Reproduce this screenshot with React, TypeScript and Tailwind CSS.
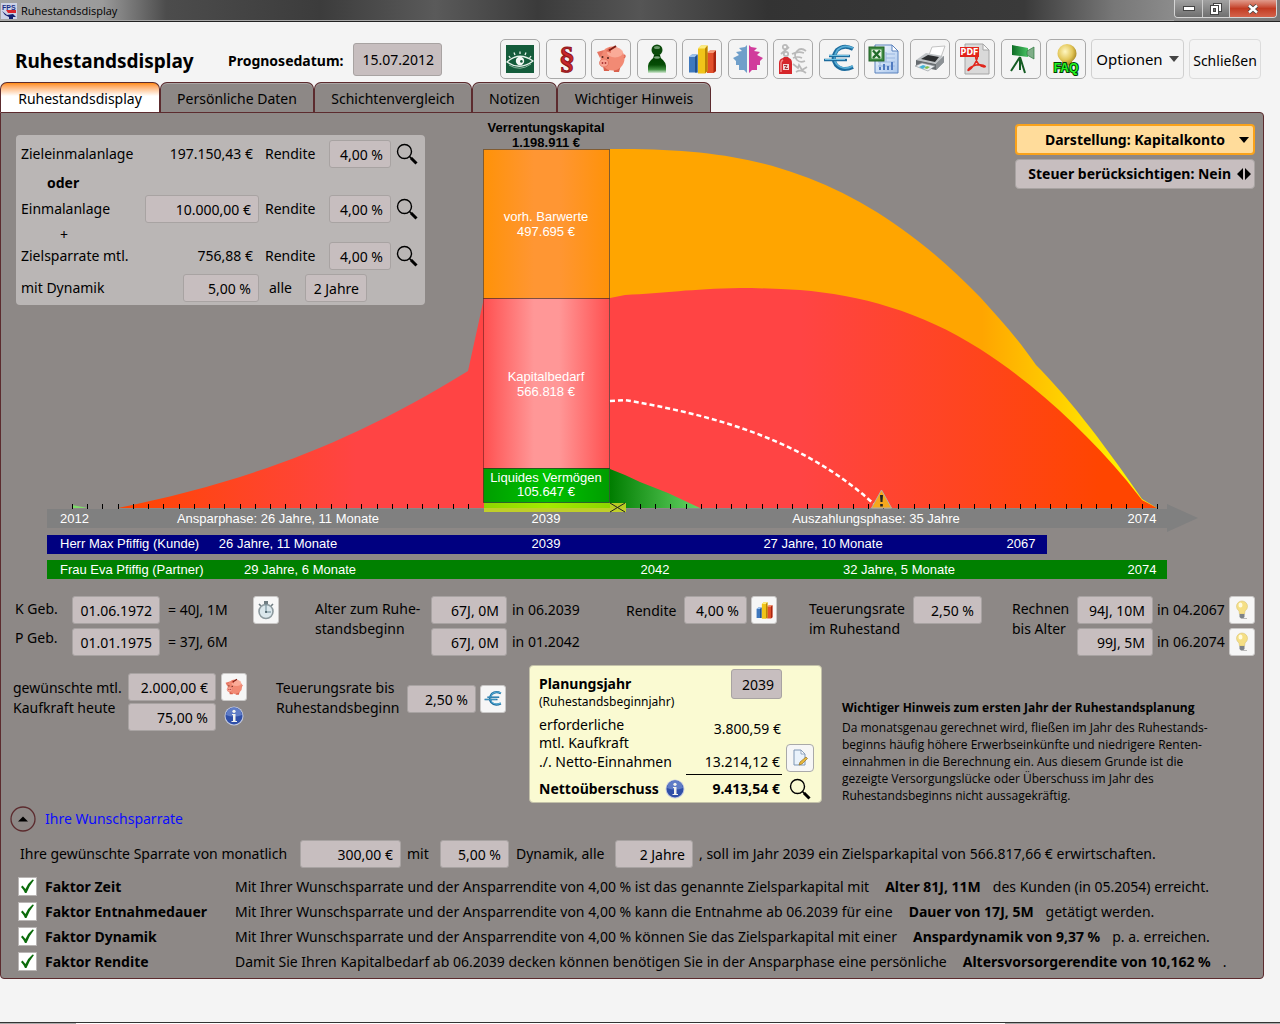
import { FC, ReactElement, ReactNode, useState } from "react";

const tabs = [
  { name: "Ruhestandsdisplay", width: "w-[160px]" },
  { name: "Persönliche Daten", width: "w-[154px]" },
  { name: "Schichtenvergleich", width: "w-[158px]" },
  { name: "Notizen", width: "w-[85px]" },
  { name: "Wichtiger Hinweis", width: "w-[154px]" },
];

const factors = [
  {
    name: "Faktor Zeit",
    before:
      "Mit Ihrer Wunschsparrate und der Ansparrendite von 4,00 % ist das genannte Zielsparkapital mit",
    strong: "Alter 81J, 11M",
    after: "des Kunden (in 05.2054) erreicht.",
  },
  {
    name: "Faktor Entnahmedauer",
    before:
      "Mit Ihrer Wunschsparrate und der Ansparrendite von 4,00 % kann die Entnahme ab 06.2039 für eine",
    strong: "Dauer von 17J, 5M",
    after: "getätigt werden.",
  },
  {
    name: "Faktor Dynamik",
    before:
      "Mit Ihrer Wunschsparrate und der Ansparrendite von 4,00 % können Sie das Zielsparkapital mit einer",
    strong: "Anspardynamik von 9,37 %",
    after: "p. a. erreichen.",
  },
  {
    name: "Faktor Rendite",
    before:
      "Damit Sie Ihren Kapitalbedarf ab 06.2039 decken können benötigen Sie in der Ansparphase eine persönliche",
    strong: "Altersvorsorgerendite von 10,162 %",
    after: ".",
  },
];

/* ---------- icons ---------- */

const EyeIcon = () => (
  <svg width="28" height="28" viewBox="0 0 28 28">
    <rect width="28" height="28" fill="#145c3b" />
    <path d="M1 17Q13 6 27 16Q14 26 1 17Z" fill="none" stroke="#e8f3ec" strokeWidth="1.3" />
    <path d="M3 20Q14 27 25 19" fill="none" stroke="#a9ccb9" strokeWidth="0.8" />
    <circle cx="14" cy="16" r="4.2" fill="#f4f8f5" />
    <circle cx="15.4" cy="16.4" r="1.3" fill="#145c3b" />
    <path d="M3 11l1.2 2M8 7.500l1 2.500M14 6.500v2.500M20 7.500l-1 2.500M25 11l-1.400 2" stroke="#e8f3ec" strokeWidth="1.3" />
  </svg>
);

const ParagraphIcon = () => (
  <svg width="32" height="38" viewBox="0 0 32 38">
    <text
      x="17"
      y="29"
      textAnchor="middle"
      fontSize="32"
      fontWeight="700"
      fill="#c9282b"
      stroke="#8c1518"
      strokeWidth="1"
      fontFamily="Liberation Serif"
    >
      §
    </text>
  </svg>
);

const PigIcon: FC<{ size?: number }> = ({ size = 30 }) => (
  <svg width={size} height={size} viewBox="0 0 30 30">
    <path d="M7 22l1 5h5l1-3zM17 24l1 4h5l2-7z" fill="#d9604c" />
    <ellipse cx="16.500" cy="14.500" rx="12" ry="12" fill="#f28a74" />
    <ellipse cx="19" cy="8.500" rx="8" ry="5" fill="#fbb3a1" opacity="0.8" />
    <path d="M1 8l7-2-4 8z" fill="#e77562" />
    <path d="M10 7l4-4 1 6z" fill="#e06a56" />
    <ellipse cx="8" cy="19" rx="4.500" ry="4" fill="#f9a493" stroke="#dd6b57" strokeWidth="0.7" />
    <circle cx="6.500" cy="19" r="0.900" fill="#a33" />
    <circle cx="9.500" cy="19" r="0.900" fill="#a33" />
    <circle cx="6.500" cy="13" r="1" fill="#51201a" />
    <circle cx="12" cy="14" r="1" fill="#51201a" />
    <path d="M13 6.500L20 2" stroke="#7f1d14" strokeWidth="2" />
    <path d="M28 11q2 1 0 3" stroke="#e06a56" strokeWidth="1.500" fill="none" />
  </svg>
);

const PersonIcon = () => (
  <svg width="30" height="32" viewBox="0 0 30 32">
    <defs>
      <linearGradient id="person" x1="0" y1="0" x2="0" y2="1">
        <stop offset="0" stopColor="#003c00" />
        <stop offset="0.55" stopColor="#064d06" />
        <stop offset="0.8" stopColor="#3f8f3f" />
        <stop offset="1" stopColor="#d5ead5" />
      </linearGradient>
    </defs>
    <circle cx="15" cy="7" r="5.500" fill="#0b4a0b" />
    <ellipse cx="15" cy="4.500" rx="3" ry="1.600" fill="#6b9a6b" />
    <path d="M12 12h6q0 3 3 5q3 3 3 6v7H6v-7q0-3 3-6q3-2 3-5z" fill="url(#person)" />
    <ellipse cx="15" cy="14.500" rx="3" ry="1.200" fill="#7ea77e" />
  </svg>
);

const BarsIcon: FC<{ size?: number }> = ({ size = 29 }) => (
  <svg width={size} height={size} viewBox="0 0 29 29">
    <path d="M1 12l3-2.500h5.500v18H1z" fill="#3f78bd" />
    <path d="M1 12l3-2.500h5.500L7 12z" fill="#9cc3ee" />
    <path d="M7 12l2.500-2.500v18H7z" fill="#23518c" />
    <path d="M19 8l3-2.500h6V26l-2.500 2H19z" fill="#e2502b" />
    <path d="M19 8l3-2.500h6L25.500 8z" fill="#f59a77" />
    <path d="M25.500 8L28 5.500V26l-2.500 2z" fill="#a8240f" />
    <path d="M10 3.500L13 .5h6.500V26L17 28.500h-7z" fill="#f0c419" />
    <path d="M10 3.500L13 .5h6.500L17 3.500z" fill="#fcec7e" />
    <path d="M17 3.500l2.500-3V26L17 28.500z" fill="#b98405" />
  </svg>
);

const FacesIcon = () => (
  <svg width="30" height="30" viewBox="0 0 30 30">
    <path d="M14 1L12 3 6 4 9 7 3 8 6 11 0 14 3 17V21L6 21V26L11 26 14 29Z" fill="#6f9fca" />
    <path d="M16 1L18 3 24 4 21 7 27 8 24 11 30 14 27 17V21L24 21V26L19 26 16 29Z" fill="#d13c9c" />
  </svg>
);

const CashIcon = () => (
  <svg width="30" height="32" viewBox="0 0 30 32">
    <g fill="none" stroke="#b9b9b9" strokeWidth="1.700">
      <circle cx="7" cy="4" r="2.200" />
      <circle cx="8" cy="11" r="2.200" />
      <path d="M11 4L3 11" />
      <path d="M28 8q-5-4-9 0-4 4 0 9 3 3 8 1M14 11q6-3 12-1M15 15q5-2 9 0" />
      <path d="M15 21l5 4 1-3 3 5 5-3M18 29q5-3 10 1" />
    </g>
    <path d="M1 31V20q0-4 4-5l1-1h4l1 1q3 1 3 5v11z" fill="#d6252a" />
    <path d="M3 29V20q0-2 2-3" stroke="#f28a8a" strokeWidth="1.500" fill="none" />
    <rect x="5" y="21" width="6" height="6" fill="#f2d6d6" />
    <path d="M6 22.500h3l-2 3h3" stroke="#8c1014" strokeWidth="0.800" fill="none" />
  </svg>
);

const EuroIcon: FC<{ size?: number }> = ({ size = 32 }) => (
  <svg width={size} height={size} viewBox="0 0 32 32">
    <g fill="none">
      <path d="M30 6Q21 1 14 7Q8 15 13 22Q19 29 30 24" stroke="#1c6b9d" strokeWidth="4" />
      <path d="M30 5Q21 1 14.500 7Q9 15 13.500 21Q20 28 30 23" stroke="#58aed6" strokeWidth="1.800" />
      <path d="M6 13h21M1 17h23" stroke="#1c6b9d" strokeWidth="2.600" />
      <path d="M6 12.500h20M2 16.500h20" stroke="#6fc0e2" strokeWidth="1" />
    </g>
  </svg>
);

const ExcelIcon = () => (
  <svg width="32" height="32" viewBox="0 0 32 32">
    <defs>
      <linearGradient id="sheet" x1="0" y1="0" x2="1" y2="1">
        <stop offset="0" stopColor="#f4f9ff" />
        <stop offset="1" stopColor="#a9c6ec" />
      </linearGradient>
    </defs>
    <path d="M7 2h17l6 6v22H7z" fill="url(#sheet)" stroke="#5b82bd" />
    <path d="M24 2v6h6z" fill="#fff" stroke="#5b82bd" />
    <path d="M18 11h9M18 15h9M10 19h17M10 23h17M12 19v8M18 9v10" stroke="#9ab7e0" />
    <path d="M12 27v-3M16 27v-6M20 27v-4M24 27v-8" stroke="#4f7ac0" strokeWidth="2" />
    <rect x="1" y="4" width="15" height="14" fill="#3c8a41" stroke="#1e5f25" />
    <rect x="3.500" y="6.500" width="10" height="9" fill="#e4f1e2" />
    <path d="M5 7.500l7 7.500M12 7.500L5 15" stroke="#216b2a" strokeWidth="2.400" />
  </svg>
);

const PrinterIcon = () => (
  <svg width="32" height="28" viewBox="0 0 32 28">
    <path d="M15 10l3-8 13-1-4 11z" fill="#fdfdfd" stroke="#b5b5b5" strokeWidth="0.800" />
    <path d="M2 15l10-7 17 3-6 8z" fill="#bfc3c6" />
    <path d="M7 14l7-4 11 2-4 5z" fill="#2d2f31" />
    <path d="M2 15l20 4 8-8v6l-8 8-20-4z" fill="#676c70" />
    <path d="M22 19l8-8v6l-8 8z" fill="#8c9195" />
    <path d="M1 21l7-3 13 3-7 5z" fill="#e9edf0" stroke="#8c9195" strokeWidth="0.600" />
    <path d="M5 22l4-2 3 1-3 3z" fill="#45b3d6" />
    <path d="M10 23l3-2 3 1-3 2z" fill="#83bf4f" />
  </svg>
);

const PdfIcon = () => (
  <svg width="32" height="32" viewBox="0 0 32 32">
    <path d="M6 1h18l6 6v24H6z" fill="#d9d9d9" stroke="#a5a5a5" />
    <path d="M24 1v6h6z" fill="#f7f7f7" stroke="#a5a5a5" />
    <path
      d="M18 13q-2 0-1 3 2 7 8 8 2 0 1-1-2-2-9-1-7 2-8 5 0 1 1 0 5-3 8-11 1-3 0-3z"
      fill="none"
      stroke="#e0251b"
      strokeWidth="1.500"
    />
    <rect x="1" y="4" width="19" height="10" fill="#e2231a" />
    <text x="10.500" y="12" textAnchor="middle" fontSize="8" fontWeight="700" fill="#fff" fontFamily="DejaVu Sans">
      PDF
    </text>
  </svg>
);

const CameraIcon = () => (
  <svg width="30" height="32" viewBox="0 0 30 32">
    <defs>
      <linearGradient id="cam" x1="0" y1="0" x2="1" y2="0">
        <stop offset="0" stopColor="#0e6b25" />
        <stop offset="1" stopColor="#48c463" />
      </linearGradient>
    </defs>
    <path d="M6 2l16 3v9L6 12z" fill="url(#cam)" />
    <path d="M21 8l7-4v12l-7-4z" fill="#7fae88" stroke="#2b7a3c" strokeWidth="0.700" />
    <path d="M14 14L5 28M14 14l0 13M14 14l5 16" stroke="#155c23" strokeWidth="2" />
  </svg>
);

const FaqIcon = () => (
  <svg width="32" height="34" viewBox="0 0 32 34">
    <defs>
      <radialGradient id="faq" cx="0.400" cy="0.350" r="0.650">
        <stop offset="0" stopColor="#fff7c2" />
        <stop offset="0.6" stopColor="#e3c75a" />
        <stop offset="1" stopColor="#a5831c" />
      </radialGradient>
    </defs>
    <path d="M17 2a9.500 9.500 0 0 1 9.500 9.500q0 4-4.500 8v4H12v-4q-4.500-4-4.500-8A9.500 9.500 0 0 1 17 2z" fill="url(#faq)" />
    <text
      x="16"
      y="30"
      textAnchor="middle"
      fontSize="12"
      fontWeight="700"
      fill="#22f522"
      stroke="#033b03"
      strokeWidth="2"
      paintOrder="stroke"
      fontFamily="Liberation Sans"
    >
      FAQ
    </text>
  </svg>
);

const BulbIcon = () => (
  <svg width="18" height="20" viewBox="0 0 18 20">
    <path d="M9 1a5.500 5.500 0 0 1 5.500 5.500q0 2.500-2.500 4.500l-.5 3H6.500L6 11Q3.500 9 3.500 6.500A5.500 5.500 0 0 1 9 1z" fill="#f5df85" stroke="#d8c275" strokeWidth="0.600" />
    <ellipse cx="7.500" cy="5" rx="2" ry="2.500" fill="#fffbe0" />
    <path d="M6.500 14h5v3l-1.500 1.500H8L6.500 17z" fill="#7d8288" />
    <path d="M8 18.500h6" stroke="#b9b9b9" />
  </svg>
);

const StopwatchIcon = () => (
  <svg width="18" height="20" viewBox="0 0 18 20">
    <path d="M7 1h4v3H7z" fill="#6e7b80" />
    <path d="M2 4l2 2M16 4l-2 2" stroke="#6e7b80" strokeWidth="1.600" />
    <circle cx="9" cy="11.500" r="7" fill="#dbe7ec" stroke="#8c999e" strokeWidth="1.600" />
    <path d="M9 4v8h5" stroke="#6a8793" fill="none" />
    <circle cx="9" cy="12" r="1" fill="#40545d" />
  </svg>
);

const NoteIcon = () => (
  <svg width="16" height="18" viewBox="0 0 16 18">
    <path d="M2 1h7l4 4v11H2z" fill="#eaf2fb" stroke="#7f96b4" />
    <path d="M9 1v4h4z" fill="#fff" stroke="#7f96b4" strokeWidth="0.800" />
    <path d="M7 16l1-3 6-5 1.500 1.500L10 15z" fill="#e9b83b" stroke="#86641a" strokeWidth="0.600" />
  </svg>
);

const InfoIcon = () => (
  <svg width="20" height="20" viewBox="0 0 20 20">
    <circle cx="10" cy="10" r="9.500" fill="#c5cbe0" />
    <circle cx="10" cy="10" r="8.500" fill="#2f4fa8" />
    <path d="M2 9a8 7.500 0 0 1 16 0q-8 3-16 0z" fill="#5f7cc6" />
    <circle cx="10" cy="5.300" r="1.600" fill="#f3f3ee" />
    <path d="M8 8h3.500v7H13v1H7.500v-1H9V9H8z" fill="#f3f3ee" />
  </svg>
);

const Magnifier = () => (
  <svg width="22" height="22" viewBox="0 0 22 22" fill="none" stroke="#000">
    <circle cx="8.500" cy="8.500" r="7" strokeWidth="1.400" />
    <path d="M13.500 13.500l2 2" strokeWidth="1.600" />
    <path d="M15 15l5.500 5.500" strokeWidth="3" />
  </svg>
);

const LogoIcon = () => (
  <svg width="16" height="16" viewBox="0 0 16 16">
    <rect width="16" height="16" fill="#cdd3e6" />
    <text x="1" y="7" fontSize="7" fontWeight="700" fill="#1a2f86" fontFamily="Liberation Sans">
      FPS
    </text>
    <path d="M5 7h10v3H7z" fill="#d8262c" />
    <path d="M1 8l5 4 6-1 3 3H12v2H8v-2l-4-2z" fill="#12206e" />
  </svg>
);

const toolbar: { label: string; icon: ReactNode }[] = [
  { label: "Ansicht", icon: <EyeIcon /> },
  { label: "Recht", icon: <ParagraphIcon /> },
  { label: "Sparen", icon: <PigIcon /> },
  { label: "Person", icon: <PersonIcon /> },
  { label: "Diagramm", icon: <BarsIcon /> },
  { label: "Partner", icon: <FacesIcon /> },
  { label: "Inflation", icon: <CashIcon /> },
  { label: "Euro", icon: <EuroIcon /> },
  { label: "Excel", icon: <ExcelIcon /> },
  { label: "Drucken", icon: <PrinterIcon /> },
  { label: "PDF", icon: <PdfIcon /> },
  { label: "Film", icon: <CameraIcon /> },
  { label: "FAQ", icon: <FaqIcon /> },
];

/* ---------- small controls ---------- */

type FieldProps = {
  id: string;
  value: string;
  label?: string;
  className?: string;
};

const Field: FC<FieldProps> = ({ id, value, label, className = "" }) => (
  <input
    id={id}
    aria-label={label}
    defaultValue={value}
    className={`h-7 min-w-0 shrink-0 rounded-[3px] border border-[#a8a3a2] bg-[#c7bebf] px-[7px] text-right ${className}`}
  />
);

const IconButton: FC<{ label: string; children: ReactNode }> = ({ label, children }) => (
  <button
    aria-label={label}
    className="flex h-7 w-[26px] shrink-0 items-center justify-center rounded-[3px] border border-[#c9c7c6] bg-[#f6f6f6]"
  >
    {children}
  </button>
);

const PlainButton: FC<{ label: string; children: ReactNode }> = ({ label, children }) => (
  <button aria-label={label} className="flex shrink-0 items-center justify-center">
    {children}
  </button>
);

/* ---------- chart ---------- */

const ticksLeft = Array.from({ length: 27 }, (_, i) => Math.round(72 + i * 15.23));
const ticksRight = Array.from({ length: 35 }, (_, i) => Math.round(640 + i * 15.2));

const Chart: FC = (): ReactElement => (
  <svg
    viewBox="1 113 1262 474"
    className="col-start-1 row-start-1 block w-full"
    fontFamily="Liberation Sans, Arial, sans-serif"
    fontSize="13"
    role="img"
    aria-label="Kapitalverlauf"
  >
    <defs>
      <linearGradient id="redLeft" gradientUnits="userSpaceOnUse" x1="118" y1="0" x2="484" y2="0">
        <stop offset="0" stopColor="#ff4500" />
        <stop offset="0.65" stopColor="#ff4444" />
        <stop offset="1" stopColor="#ff4444" />
      </linearGradient>
      <linearGradient id="redRight" gradientUnits="userSpaceOnUse" x1="610" y1="0" x2="1157" y2="0">
        <stop offset="0" stopColor="#ff4444" />
        <stop offset="0.35" stopColor="#ff4444" />
        <stop offset="0.9" stopColor="#ff4500" />
        <stop offset="1" stopColor="#ff4500" />
      </linearGradient>
      <linearGradient id="orangeRight" gradientUnits="userSpaceOnUse" x1="610" y1="0" x2="1157" y2="0">
        <stop offset="0" stopColor="#ffa500" />
        <stop offset="0.68" stopColor="#ffa500" />
        <stop offset="0.94" stopColor="#fff200" />
        <stop offset="1" stopColor="#ffff00" />
      </linearGradient>
      <linearGradient id="greenRight" gradientUnits="userSpaceOnUse" x1="610" y1="0" x2="700" y2="0">
        <stop offset="0" stopColor="#007d00" />
        <stop offset="1" stopColor="#66d466" />
      </linearGradient>
      <linearGradient id="barOrange">
        <stop offset="0" stopColor="#ff9208" />
        <stop offset="0.4" stopColor="#ff9633" />
        <stop offset="0.6" stopColor="#ff9633" />
        <stop offset="1" stopColor="#ff9208" />
      </linearGradient>
      <linearGradient id="barRed">
        <stop offset="0" stopColor="#ff5050" />
        <stop offset="0.4" stopColor="#ff9797" />
        <stop offset="0.6" stopColor="#ff9797" />
        <stop offset="1" stopColor="#ff5050" />
      </linearGradient>
      <linearGradient id="barGreen">
        <stop offset="0" stopColor="#009d00" />
        <stop offset="0.5" stopColor="#00c200" />
        <stop offset="1" stopColor="#009d00" />
      </linearGradient>
      <linearGradient id="barLime">
        <stop offset="0" stopColor="#8ed600" />
        <stop offset="0.5" stopColor="#a2ea00" />
        <stop offset="1" stopColor="#8ed600" />
      </linearGradient>
    </defs>

    {/* areas */}
    <path
      d="M610 149C690 148 750 156 800 175C860 196 920 235 980 297C1000 319 1018 339 1036 365C1065 394 1098 435 1142 499L1157 508H610Z"
      fill="url(#orangeRight)"
    />
    <path d="M118 508C240 483 345 447 468 371L484 298V508Z" fill="url(#redLeft)" />
    <path
      d="M610 298L625 295C665 293 690 289 740 288C760 288 780 289 800 290C860 295 920 311 980 349C1030 381 1082 427 1127 481L1142 500L1157 508H610Z"
      fill="url(#redRight)"
    />
    <path d="M610 469L625 475L640 482L668 493L700 508H610Z" fill="url(#greenRight)" />
    <path d="M72 505L88 508H72Z" fill="#7fdc6a" />

    {/* capital column */}
    <g stroke="#000" strokeOpacity="0.35">
      <rect x="483.500" y="149.500" width="126" height="149" fill="url(#barOrange)" />
      <rect x="483.500" y="298.500" width="126" height="170" fill="url(#barRed)" />
      <rect x="483.500" y="468.500" width="126" height="34" fill="url(#barGreen)" />
    </g>
    <rect x="484" y="503" width="126" height="9" fill="url(#barLime)" />
    <rect x="610" y="503" width="16" height="9" fill="#b8cc22" />

    <path
      d="M610 401L625 400C710 415 800 437 874 504"
      fill="none"
      stroke="#fff"
      strokeWidth="2.500"
      strokeDasharray="5 3"
    />

    {/* time axis */}
    {[...ticksLeft, ...ticksRight].map((x) => (
      <rect key={x} x={x} y="504" width="1" height="5" fill="#000" />
    ))}
    <path d="M881.500 490L891.500 508H871.500Z" fill="#f6a81c" stroke="#b9b0a0" strokeLinejoin="round" />
    <path d="M880 495h3l-.5 7h-2zM880.200 504h2.600v2.400h-2.600z" fill="#222" />

    <path d="M47 509H1167V504L1198 518L1167 532V528H47Z" fill="#808080" />
    <rect x="484" y="508" width="142" height="4" fill="#c0cf2a" />
    <path d="M610 503l15 9M625 503l-15 9" stroke="#222" />
    <rect x="47" y="535" width="1000" height="19" fill="#000080" />
    <rect x="47" y="560" width="1120" height="19" fill="#008000" />

    <g fill="#000" fontWeight="700" textAnchor="middle">
      <text x="546" y="132">Verrentungskapital</text>
      <text x="546" y="147">1.198.911 €</text>
    </g>
    <g fill="#fff" textAnchor="middle">
      <text x="546" y="221">vorh. Barwerte</text>
      <text x="546" y="236">497.695 €</text>
      <text x="546" y="381">Kapitalbedarf</text>
      <text x="546" y="396">566.818 €</text>
      <text x="546" y="482">Liquides Vermögen</text>
      <text x="546" y="496">105.647 €</text>
      <text x="278" y="523">Ansparphase: 26 Jahre, 11 Monate</text>
      <text x="546" y="523">2039</text>
      <text x="876" y="523">Auszahlungsphase: 35 Jahre</text>
      <text x="1142" y="523">2074</text>
      <text x="278" y="548">26 Jahre, 11 Monate</text>
      <text x="546" y="548">2039</text>
      <text x="823" y="548">27 Jahre, 10 Monate</text>
      <text x="1021" y="548">2067</text>
      <text x="300" y="574">29 Jahre, 6 Monate</text>
      <text x="655" y="574">2042</text>
      <text x="899" y="574">32 Jahre, 5 Monate</text>
      <text x="1142" y="574">2074</text>
    </g>
    <g fill="#fff">
      <text x="60" y="523">2012</text>
      <text x="60" y="548">Herr Max Pfiffig (Kunde)</text>
      <text x="60" y="574">Frau Eva Pfiffig (Partner)</text>
    </g>
  </svg>
);

/* ---------- panels over the chart ---------- */

const InvestmentPanel: FC = (): ReactElement => (
  <div className="flex w-[409px] flex-col rounded bg-[#bab6b5] pt-[5px] pr-[2px] pb-[3px] pl-[5px]">
    <div className="grid grid-cols-[124px_114px_70px_62px_1fr] items-center">
      <span>Zieleinmalanlage</span>
      <span className="pr-[6px] text-right">197.150,43 €</span>
      <label htmlFor="rendite1" className="pl-[6px]">
        Rendite
      </label>
      <Field id="rendite1" value="4,00 %" />
      <PlainButton label="Details Zieleinmalanlage">
        <Magnifier />
      </PlainButton>
    </div>
    <div className="h-[27px] pt-[5px] pl-[26px] font-bold">oder</div>
    <div className="grid grid-cols-[124px_114px_70px_62px_1fr] items-center">
      <label htmlFor="einmal">Einmalanlage</label>
      <Field id="einmal" value="10.000,00 €" />
      <label htmlFor="rendite2" className="pl-[6px]">
        Rendite
      </label>
      <Field id="rendite2" value="4,00 %" />
      <PlainButton label="Details Einmalanlage">
        <Magnifier />
      </PlainButton>
    </div>
    <div className="h-[19px] pt-[2px] pl-[39px]">+</div>
    <div className="grid grid-cols-[124px_114px_70px_62px_1fr] items-center">
      <span>Zielsparrate mtl.</span>
      <span className="pr-[6px] text-right">756,88 €</span>
      <label htmlFor="rendite3" className="pl-[6px]">
        Rendite
      </label>
      <Field id="rendite3" value="4,00 %" />
      <PlainButton label="Details Zielsparrate">
        <Magnifier />
      </PlainButton>
    </div>
    <div className="mt-1 flex items-center">
      <label htmlFor="dynamik" className="w-[162px]">
        mit Dynamik
      </label>
      <Field id="dynamik" value="5,00 %" className="w-[76px]" />
      <label htmlFor="alle" className="w-[46px] pl-[10px]">
        alle
      </label>
      <Field id="alle" value="2 Jahre" className="w-[62px]" />
    </div>
  </div>
);

const DisplayOptions: FC = (): ReactElement => (
  <div className="flex w-[240px] flex-col gap-1 text-[14px] font-bold">
    <div className="grid items-center">
      <select
        aria-label="Darstellung"
        className="col-start-1 row-start-1 h-[31px] appearance-none rounded border-2 border-[#f9a21b] bg-[#ffdc9b] pr-7 text-right [text-align-last:right]"
      >
        <option>Darstellung: Kapitalkonto</option>
      </select>
      <svg width="10" height="6" className="pointer-events-none col-start-1 row-start-1 mr-[6px] justify-self-end">
        <path d="M0 0h10L5 6z" />
      </svg>
    </div>
    <button className="flex h-[30px] items-center justify-end gap-[6px] rounded border border-[#a8a3a2] bg-[#c7bebf] pr-[3px] whitespace-nowrap">
      Steuer berücksichtigen: Nein
      <svg width="14" height="12">
        <path d="M6 0v12L0 6zM8 0v12l6-6z" />
      </svg>
    </button>
  </div>
);

/* ---------- form rows ---------- */

const BirthRow: FC = (): ReactElement => (
  <div className="grid grid-cols-[300fr_311fr_183fr_203fr_243fr] pr-2 pl-[14px] leading-5 whitespace-nowrap">
    <div className="flex">
      <div className="grid grid-cols-[57px_88px_77px] items-center gap-y-1">
        <label htmlFor="kgeb" className="self-start pt-[3px]">
          K Geb.
        </label>
        <Field id="kgeb" value="01.06.1972" />
        <span className="pl-2">= 40J, 1M</span>
        <label htmlFor="pgeb" className="self-start">
          P Geb.
        </label>
        <Field id="pgeb" value="01.01.1975" />
        <span className="pl-2">= 37J, 6M</span>
      </div>
      <div className="ml-4">
        <IconButton label="Alter berechnen">
          <StopwatchIcon />
        </IconButton>
      </div>
    </div>
    <div className="flex">
      <div className="w-[116px] pt-[3px]">
        Alter zum Ruhe-
        <br />
        standsbeginn
      </div>
      <div className="grid grid-cols-[76px_1fr] items-center gap-y-1">
        <Field id="ruhe1" label="Alter zum Ruhestandsbeginn Kunde" value="67J, 0M" />
        <span className="pl-[5px]">in 06.2039</span>
        <Field id="ruhe2" label="Alter zum Ruhestandsbeginn Partner" value="67J, 0M" />
        <span className="pl-[5px]">in 01.2042</span>
      </div>
    </div>
    <div className="flex h-7 items-center">
      <label htmlFor="rendite4" className="w-[58px] pt-[2px]">
        Rendite
      </label>
      <Field id="rendite4" value="4,00 %" className="mr-1 w-[63px]" />
      <IconButton label="Rendite Diagramm">
        <BarsIcon size={17} />
      </IconButton>
    </div>
    <div className="flex">
      <label htmlFor="teuer1" className="w-[104px] pt-[3px]">
        Teuerungsrate
        <br />
        im Ruhestand
      </label>
      <Field id="teuer1" value="2,50 %" className="w-[69px]" />
    </div>
    <div className="flex">
      <div className="w-[65px] pt-[3px]">
        Rechnen
        <br />
        bis Alter
      </div>
      <div className="grid grid-cols-[76px_76px_26px] items-center gap-y-1">
        <Field id="bis1" label="Rechnen bis Alter Kunde" value="94J, 10M" />
        <span className="pl-[4px]">in 04.2067</span>
        <IconButton label="Hinweis Kunde">
          <BulbIcon />
        </IconButton>
        <Field id="bis2" label="Rechnen bis Alter Partner" value="99J, 5M" />
        <span className="pl-[4px]">in 06.2074</span>
        <IconButton label="Hinweis Partner">
          <BulbIcon />
        </IconButton>
      </div>
    </div>
  </div>
);

const PlanBox: FC = (): ReactElement => (
  <div className="h-[138px] w-[293px] rounded border border-[#c3c1a9] bg-[#fafad2] pt-[3px] pr-[7px] pl-[9px]">
    <div className="flex h-[46px] justify-between">
      <label htmlFor="plan" className="pt-[5px]">
        <span className="block leading-[20px] font-bold">Planungsjahr</span>
        <span className="block text-[12px] leading-4">(Ruhestandsbeginnjahr)</span>
      </label>
      <Field id="plan" value="2039" className="mr-[32px] h-[30px] w-[51px]" />
    </div>
    <div className="flex h-[38px] justify-between pt-[1px] leading-[18px]">
      <span>
        erforderliche
        <br />
        mtl. Kaufkraft
      </span>
      <span className="mr-[33px] pt-[4px]">3.800,59 €</span>
    </div>
    <div className="flex h-[18px] items-center leading-[18px]">
      <span className="grow">./. Netto-Einnahmen</span>
      <span className="mr-[6px]">13.214,12 €</span>
      <div className="-mt-2 h-7">
        <button
          aria-label="Einnahmen bearbeiten"
          className="flex h-7 w-7 items-center justify-center rounded border border-[#a9a9a9] bg-[#f6f6f6]"
        >
          <NoteIcon />
        </button>
      </div>
    </div>
    <div className="mr-[32px] ml-auto h-[4px] w-[96px] border-b border-black" />
    <div className="flex h-[26px] items-center pt-[2px] font-bold">
      <span>Nettoüberschuss</span>
      <span className="ml-[6px]">
        <InfoIcon />
      </span>
      <span className="mr-[9px] grow text-right">9.413,54 €</span>
      <span className="mr-[3px] flex">
        <PlainButton label="Details Nettoüberschuss">
          <Magnifier />
        </PlainButton>
      </span>
    </div>
  </div>
);

const PlanRow: FC = (): ReactElement => (
  <div className="mt-[9px] grid grid-cols-[263fr_253fr_313fr_413fr] pr-2 pl-3 leading-5 whitespace-nowrap">
    <div className="flex pt-2">
      <label htmlFor="kaufkraft" className="w-[115px] pt-[5px]">
        gewünschte mtl.
        <br />
        Kaufkraft heute
      </label>
      <div className="flex flex-col gap-[2px]">
        <Field id="kaufkraft" value="2.000,00 €" className="w-[88px]" />
        <Field id="prozent" label="Kaufkraft in Prozent" value="75,00 %" className="w-[88px]" />
      </div>
      <div className="ml-[5px] flex flex-col items-center gap-[5px]">
        <IconButton label="Sparen">
          <PigIcon size={18} />
        </IconButton>
        <InfoIcon />
      </div>
    </div>
    <div className="flex pt-[13px]">
      <label htmlFor="teuer2" className="w-[131px]">
        Teuerungsrate bis
        <br />
        Ruhestandsbeginn
      </label>
      <div className="mt-[7px] flex gap-1">
        <Field id="teuer2" value="2,50 %" className="w-[69px]" />
        <IconButton label="Teuerung">
          <EuroIcon size={18} />
        </IconButton>
      </div>
    </div>
    <PlanBox />
    <div className="pt-[34px] font-['Open_Sans',sans-serif] text-[12px] leading-[17px]">
      <h2 className="mb-[3px] font-bold">Wichtiger Hinweis zum ersten Jahr der Ruhestandsplanung</h2>
      <p>
        Da monatsgenau gerechnet wird, fließen im Jahr des Ruhestands-
        <br />
        beginns häufig höhere Erwerbseinkünfte und niedrigere Renten-
        <br />
        einnahmen in die Berechnung ein. Aus diesem Grunde ist die
        <br />
        gezeigte Versorgungslücke oder Überschuss im Jahr des
        <br />
        Ruhestandsbeginns nicht aussagekräftig.
      </p>
    </div>
  </div>
);

const SavingsSection: FC = (): ReactElement => (
  <section className="pt-[2px] pb-1">
    <button className="ml-[9px] flex items-center gap-[9px] text-[#0b0bff]">
      <svg width="26" height="26" viewBox="0 0 26 26">
        <circle cx="13" cy="13" r="12" fill="none" stroke="#5c2b2e" strokeWidth="1.300" />
        <path d="M8 15.500h10L13 10.500z" />
      </svg>
      Ihre Wunschsparrate
    </button>
    <div className="mt-2 flex items-center pl-[19px] whitespace-nowrap">
      <label htmlFor="sparrate" className="w-[280px]">
        Ihre gewünschte Sparrate von monatlich
      </label>
      <Field id="sparrate" value="300,00 €" className="w-[101px]" />
      <label htmlFor="spardyn" className="w-[39px] pl-[6px]">
        mit
      </label>
      <Field id="spardyn" value="5,00 %" className="w-[69px]" />
      <label htmlFor="sparalle" className="w-[106px] pl-[7px]">
        Dynamik, alle
      </label>
      <Field id="sparalle" value="2 Jahre" className="w-[78px]" />
      <span className="pl-[6px]">
        , soll im Jahr 2039 ein Zielsparkapital von 566.817,66 € erwirtschaften.
      </span>
    </div>
    <div className="mt-[6px]">
      {factors.map((factor) => (
        <div key={factor.name} className="flex h-[25px] items-center pl-[17px] whitespace-nowrap">
          <label className="flex w-[217px] items-center gap-2 font-bold">
            <span className="grid">
              <input
                type="checkbox"
                defaultChecked
                className="peer col-start-1 row-start-1 size-[19px] appearance-none border border-[#b9b5b4] bg-white"
              />
              <svg
                width="19"
                height="19"
                viewBox="0 0 19 19"
                className="pointer-events-none invisible col-start-1 row-start-1 peer-checked:visible"
              >
                <path d="M3 10l1.500-1.500 3 3.500Q10 6 14.500 2.500L16 3Q11 9 8.500 16H7Q5.500 12.500 3 10z" fill="#0b6b0b" />
              </svg>
            </span>
            {factor.name}
          </label>
          <span>{factor.before}</span>
          <strong className="mr-3 ml-4">{factor.strong}</strong>
          <span>{factor.after}</span>
        </div>
      ))}
    </div>
  </section>
);

/* ---------- window ---------- */

const TitleBar: FC = (): ReactElement => (
  <div className="flex h-[22px] items-start border-b border-[#222] bg-[linear-gradient(90deg,#a5a5a5_0%,#9a9a9a_8%,#4c4c4c_13%,#3c3c3c_25%,#5a5a5a_34%,#3b3b3b_42%,#555_50%,#333_60%,#3a3a3a_80%,#777_87%,#8d8d8d_92%,#777_100%)] pr-[3px]">
    <div className="flex h-[21px] grow items-center gap-1 border-b border-[#a8a8a8] pt-[1px] pl-[1px] font-['Open_Sans',sans-serif] text-[11px] text-black">
      <LogoIcon />
      Ruhestandsdisplay
    </div>
    <div className="flex h-[18px] overflow-hidden rounded-b border border-t-0 border-[#d5d5d5]">
      <button aria-label="Minimieren" className="flex w-7 items-center justify-center border-r border-[#ccc] bg-linear-to-b from-[#a2a2a2] to-[#6f6f6f]">
        <svg width="12" height="5">
          <rect x="0.500" y="0.500" width="11" height="4" fill="#fff" stroke="#444" />
        </svg>
      </button>
      <button aria-label="Wiederherstellen" className="flex w-[27px] items-center justify-center border-r border-[#ccc] bg-linear-to-b from-[#a2a2a2] to-[#6f6f6f]">
        <svg width="12" height="12" fill="#fff" stroke="#444">
          <rect x="3.500" y="0.500" width="8" height="8" />
          <rect x="0.500" y="2.500" width="8" height="9" />
          <rect x="3.500" y="5.500" width="2" height="3" fill="#777" />
        </svg>
      </button>
      <button aria-label="Fenster schließen" className="flex w-[46px] items-center justify-center bg-linear-to-b from-[#e09b8c] from-0% via-[#c23b22] via-50% to-[#d4624a]">
        <svg width="12" height="10">
          <path d="M2 1.500l8 7M10 1.500l-8 7" stroke="#444" strokeWidth="4" />
          <path d="M2 1.500l8 7M10 1.500l-8 7" stroke="#fff" strokeWidth="2.400" />
        </svg>
      </button>
    </div>
  </div>
);

const App: FC = (): ReactElement => {
  const [activeTab, setActiveTab] = useState("Ruhestandsdisplay");

  return (
    <div className="flex min-h-screen flex-col bg-[#f4f4f4] font-['Noto_Sans','Open_Sans',sans-serif] text-[14px] leading-5 text-black">
      <TitleBar />

      <header className="flex h-[60px] items-center pt-[14px] pr-[19px] pl-[15px]">
        <h1 className="w-[213px] pt-[3px] text-[19px] font-bold">Ruhestandsdisplay</h1>
        <label htmlFor="prognose" className="w-[125px] pt-[3px] font-bold">
          Prognosedatum:
        </label>
        <Field id="prognose" value="15.07.2012" className="h-[33px] w-[89px]" />
        <div className="ml-auto flex w-[586px] justify-between">
          {toolbar.map((item) => (
            <button
              key={item.label}
              aria-label={item.label}
              className="flex size-10 items-center justify-center rounded-[5px] border border-[#a9a9a9]"
            >
              {item.icon}
            </button>
          ))}
        </div>
        <button className="ml-[5px] flex h-10 w-[93px] items-center justify-center gap-[6px] rounded border border-[#d0d0d0] text-[15px]">
          Optionen
          <svg width="10" height="6">
            <path d="M0 0h10L5 6z" fill="#444" />
          </svg>
        </button>
        <button className="ml-[5px] h-10 w-[72px] rounded border border-[#dcdcdc] pt-[3px]">Schließen</button>
      </header>

      <div role="tablist" className="flex h-[30px]">
        {tabs.map((tab) => (
          <button
            key={tab.name}
            role="tab"
            aria-selected={activeTab === tab.name}
            onClick={() => setActiveTab(tab.name)}
            className={`rounded-t-[7px] border border-b-0 border-[#5c2b2e] pt-[3px] ${tab.width} ${
              activeTab === tab.name
                ? "bg-linear-to-b from-[#ff8c00] to-white to-45%"
                : "bg-[#8d8886] shadow-[inset_0_1px_0_#aaa5a4]"
            }`}
          >
            {tab.name}
          </button>
        ))}
      </div>

      <main className="mr-4 rounded-b rounded-tr border border-[#5c2b2e] bg-[#8d8886]">
        <div className="grid">
          <Chart />
          <div className="col-start-1 row-start-1 flex items-start justify-between pr-2 pl-[15px]">
            <div className="pt-[22px]">
              <InvestmentPanel />
            </div>
            <div className="pt-[11px]">
              <DisplayOptions />
            </div>
          </div>
        </div>
        <div className="pt-[9px]">
          <BirthRow />
          <PlanRow />
          <SavingsSection />
        </div>
      </main>

      <footer className="mt-auto flex h-[2px] border-t border-[#333]">
        <div className="w-[76px] bg-[#aaa]" />
        <div className="grow bg-white" />
        <div className="w-[275px] bg-[#aaa]" />
      </footer>
    </div>
  );
};

export default App;
